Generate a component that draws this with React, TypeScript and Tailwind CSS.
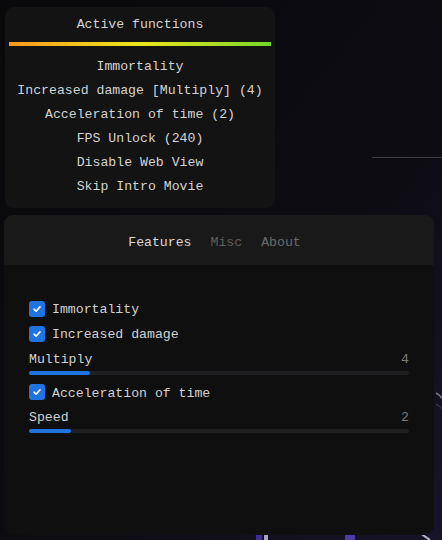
import React from "react";

const mono = { fontFamily: '"Liberation Mono", "DejaVu Sans Mono", monospace' };

const active = [
  "Immortality",
  "Increased damage [Multiply] (4)",
  "Acceleration of time (2)",
  "FPS Unlock (240)",
  "Disable Web View",
  "Skip Intro Movie",
];

function Check() {
  return (
    <span className="flex h-4 w-4 shrink-0 items-center justify-center rounded-[3px] bg-[#1f74e0]">
      <svg width="10" height="10" viewBox="0 0 10 10" fill="none">
        <path d="M2 5.2 L4.1 7.2 L8 2.9" stroke="#fff" strokeWidth="1.6" strokeLinecap="round" strokeLinejoin="round" />
      </svg>
    </span>
  );
}

function CheckRow({ label, h = "h-[25px]" }: { label: string; h?: string }) {
  return (
    <div className={`flex items-center gap-[7px] ${h}`}>
      <Check />
      <span className="pt-[3px] text-[#d2d2d2]">{label}</span>
    </div>
  );
}

function Slider({ label, value, fill }: { label: string; value: string; fill: number }) {
  return (
    <div>
      <div className="flex h-[24px] items-center justify-between pt-[4px]">
        <span className="text-[#d2d2d2]">{label}</span>
        <span className="text-[#7c7c7c]">{value}</span>
      </div>
      <div className="mt-px h-[4px] w-full rounded-full bg-[#1f1f21]">
        <div className="h-full rounded-full bg-[#1f74e0]" style={{ width: fill }} />
      </div>
    </div>
  );
}

export default function App() {
  return (
    <div className="relative h-[540px] w-[442px] overflow-hidden bg-[#0b0a0e] text-[13.2px]" style={mono}>
      {/* backdrop scene */}
      <svg className="absolute inset-0" width="442" height="540" viewBox="0 0 442 540">
        <defs>
          <linearGradient id="haze" x1="0" y1="0" x2="1" y2="1">
            <stop offset="0" stopColor="#09090b" />
            <stop offset="0.6" stopColor="#0d0c12" />
            <stop offset="1" stopColor="#17142a" />
          </linearGradient>
        </defs>
        <rect width="442" height="540" fill="url(#haze)" />
        <line x1="372" y1="157.5" x2="442" y2="157.5" stroke="#3b3b40" strokeWidth="1.2" />
        <path d="M436 393 Q442 396 444 402" stroke="#77727f" strokeWidth="1.5" fill="none" />
        <path d="M436 404 Q441 406 444 412" stroke="#4a4657" strokeWidth="1" fill="none" />
        <rect x="256" y="535" width="6" height="5" fill="#3a2f9a" />
        <rect x="264" y="535" width="4" height="5" fill="#a8a4c4" />
        <rect x="345" y="535" width="10" height="5" fill="#4b3ca8" />
        <path d="M420 533 L430 540" stroke="#bdb8cc" strokeWidth="2" />
      </svg>

      <div className="relative flex flex-col">
        {/* active functions overlay */}
        <div className="ml-[5px] mt-[7px] flex h-[201px] w-[270px] flex-col rounded-[9px] bg-[#131313] px-[4px] pt-[4px] text-[#d4d4d4]">
          <div className="flex h-[24px] items-center justify-center pt-[4px]">Active functions</div>
          <div className="mt-[7px] h-[4px] w-full bg-linear-to-r from-[#f8981c] via-[#e9e61b] to-[#73d62a]" />
          <div className="mt-[7px] flex flex-col">
            {active.map((a) => (
              <div key={a} className="flex h-[24px] items-center justify-center whitespace-nowrap pt-[4px]">
                {a}
              </div>
            ))}
          </div>
        </div>

        {/* main menu window */}
        <div className="ml-[4px] mt-[7px] flex h-[320px] w-[430px] flex-col overflow-hidden rounded-[9px] bg-[#0f0f0f]">
          <div className="flex h-[50px] items-center justify-center gap-[19px] bg-[#191919] pr-[9px] pt-[5px]">
            <span className="text-[#dadada]">Features</span>
            <span className="text-[#5f5f5f]">Misc</span>
            <span className="text-[#6a6a6a]">About</span>
          </div>
          <div className="flex flex-col px-[25px] pt-[31px]">
            <CheckRow label="Immortality" />
            <CheckRow label="Increased damage" />
            <Slider label="Multiply" value="4" fill={61} />
            <div className="mt-[5px]">
              <CheckRow label="Acceleration of time" h="h-[24px]" />
            </div>
            <Slider label="Speed" value="2" fill={42} />
          </div>
        </div>
      </div>
    </div>
  );
}
